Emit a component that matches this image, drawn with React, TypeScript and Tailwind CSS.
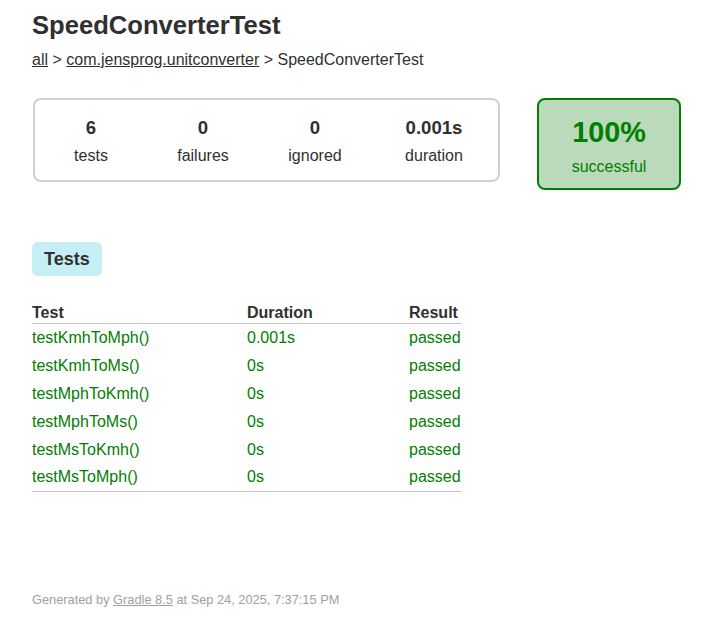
const tests = [
  { name: "testKmhToMph()", duration: "0.001s" },
  { name: "testKmhToMs()", duration: "0s" },
  { name: "testMphToKmh()", duration: "0s" },
  { name: "testMphToMs()", duration: "0s" },
  { name: "testMsToKmh()", duration: "0s" },
  { name: "testMsToMph()", duration: "0s" },
];

const counters = [
  { value: "6", label: "tests", w: "w-[112px]" },
  { value: "0", label: "failures", w: "w-[112px]" },
  { value: "0", label: "ignored", w: "w-[112px]" },
  { value: "0.001s", label: "duration", w: "w-[126px]" },
];

export default function App() {
  return (
    <div className="min-h-screen bg-white text-[#303030] text-[16px] font-['Liberation_Sans',Arial,sans-serif]">
      <div className="pl-[32px] pr-[25px] pt-[10px]">
        <h1 className="text-[25.6px] font-bold leading-[30px]">SpeedConverterTest</h1>

        <div className="mt-[10px] leading-[20px]">
          <a className="underline text-[#303030]">all</a> &gt;{" "}
          <a className="underline text-[#303030]">com.jensprog.unitconverter</a> &gt; SpeedConverterTest
        </div>

        {/* summary */}
        <div className="mt-[28px] flex items-start">
          <div className="ml-px w-[467px] h-[84px] border-2 border-[#d0d0d0] rounded-[8px] flex">
            {counters.map((c) => (
              <div key={c.label} className={`${c.w} text-center pt-[18px]`}>
                <div className="text-[18.6px] font-bold leading-[20px]">{c.value}</div>
                <div className="mt-[8px] leading-[20px]">{c.label}</div>
              </div>
            ))}
          </div>
          <div className="ml-[37px] w-[144px] h-[92px] border-2 border-[#008000] bg-[#bbd9bb] rounded-[8px] text-center text-[#008000] pt-[16px]">
            <div className="text-[28.8px] font-bold leading-[32px]">100%</div>
            <div className="mt-[9px] leading-[20px]">successful</div>
          </div>
        </div>

        {/* tabs */}
        <div className="mt-[52px]">
          <div className="inline-block bg-[#c5eff5] rounded-[6px] px-[12px] py-[5px] text-[18px] font-bold leading-[24px]">
            Tests
          </div>
        </div>

        <table className="mt-[27px] w-[430px] border-collapse text-left">
          <thead>
            <tr className="border-b border-[#c8c8c8]">
              <th className="font-bold leading-[20px] w-[215px] p-0">Test</th>
              <th className="font-bold leading-[20px] w-[162px] p-0">Duration</th>
              <th className="font-bold leading-[20px] p-0">Result</th>
            </tr>
          </thead>
          <tbody className="text-[#008000]">
            {tests.map((t, i) => (
              <tr key={t.name} className={i === tests.length - 1 ? "border-b border-[#c8c8c8]" : ""}>
                <td className="h-[28px] p-0 align-middle">{t.name}</td>
                <td className="h-[28px] p-0 align-middle">{t.duration}</td>
                <td className="h-[28px] p-0 align-middle">passed</td>
              </tr>
            ))}
          </tbody>
        </table>

        <div className="mt-[98px] text-[12.8px] text-[#a0a0a0] whitespace-nowrap">
          Generated by <a className="underline text-[#a0a0a0]">Gradle 8.5</a> at Sep 24, 2025, 7:37:15 PM
        </div>
      </div>
    </div>
  );
}
